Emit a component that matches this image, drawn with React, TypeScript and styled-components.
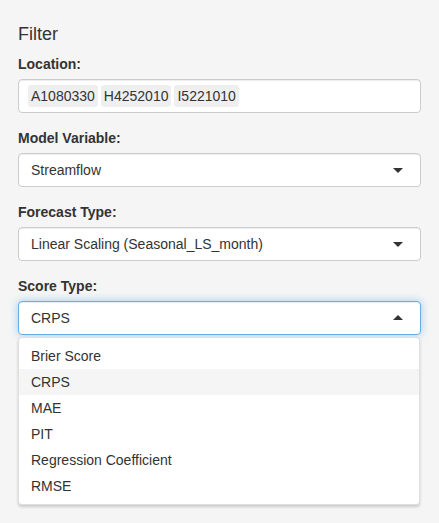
import React, { useState } from 'react';
import styled, { createGlobalStyle, css } from 'styled-components';

const GlobalStyle = createGlobalStyle`
  html, body {
    margin: 0;
    padding: 0;
    background: #f5f5f5;
  }
  body {
    font-family: 'Liberation Sans', Arial, sans-serif;
    font-size: 14px;
    line-height: 20px;
    color: #333;
  }
`;

const Panel = styled.div`
  box-sizing: border-box;
  width: 439px;
  min-height: 523px;
  padding: 24px 18px 0 18px;
  background: #f5f5f5;
`;

const Heading = styled.h4`
  margin: 0 0 10px 0;
  height: 20px;
  font-size: 18px;
  font-weight: 500;
  line-height: 20px;
  color: #333;
`;

const FormGroup = styled.div`
  position: relative;
  margin-bottom: 15px;
`;

const Label = styled.label`
  display: block;
  margin-bottom: 5px;
  font-weight: bold;
  line-height: 20px;
`;

const Control = styled.div<{ $focused?: boolean; $multi?: boolean }>`
  box-sizing: border-box;
  display: flex;
  align-items: center;
  height: 34px;
  padding: 0 17px 0 ${({ $multi }) => ($multi ? '9px' : '12px')};
  background: #fff;
  border: 1px solid #ccc;
  border-radius: 4px;
  box-shadow: inset 0 1px 1px rgba(0, 0, 0, 0.075);
  cursor: pointer;
  ${({ $focused }) =>
    $focused &&
    css`
      border-color: #66afe9;
      box-shadow: inset 0 1px 1px rgba(0, 0, 0, 0.075), 0 0 8px rgba(102, 175, 233, 0.6);
    `}
`;

const Value = styled.span`
  flex: 1;
  white-space: nowrap;
`;

const Chip = styled.span`
  padding: 1px 3px;
  margin-right: 3px;
  background: #efefef;
  border-radius: 3px;
  line-height: 20px;
`;

const Caret = styled.span<{ $up?: boolean }>`
  width: 0;
  height: 0;
  margin-left: auto;
  border-left: 5px solid transparent;
  border-right: 5px solid transparent;
  ${({ $up }) =>
    $up
      ? css`
          border-bottom: 5px solid #333;
          margin-top: -2px;
        `
      : css`
          border-top: 5px solid #333;
          margin-top: 1px;
        `}
`;

const Dropdown = styled.div`
  position: absolute;
  top: calc(100% + 2px);
  left: 0;
  right: 1px;
  z-index: 10;
  padding: 5px 0;
  background: #fff;
  border: 1px solid rgba(0, 0, 0, 0.12);
  border-radius: 4px;
  box-shadow: 0 2px 3px rgba(0, 0, 0, 0.18);
`;

const Option = styled.div<{ $active?: boolean }>`
  padding: 3px 12px;
  line-height: 20px;
  color: #333;
  background: ${({ $active }) => ($active ? '#f5f5f5' : 'transparent')};
  cursor: pointer;
`;

const scoreTypes = ['Brier Score', 'CRPS', 'MAE', 'PIT', 'Regression Coefficient', 'RMSE'];

export default function App() {
  const [score, setScore] = useState('CRPS');

  return (
    <Panel>
      <GlobalStyle />
      <Heading>Filter</Heading>

      <FormGroup>
        <Label>Location:</Label>
        <Control $multi>
          <Chip>A1080330</Chip>
          <Chip>H4252010</Chip>
          <Chip>I5221010</Chip>
        </Control>
      </FormGroup>

      <FormGroup>
        <Label>Model Variable:</Label>
        <Control>
          <Value>Streamflow</Value>
          <Caret />
        </Control>
      </FormGroup>

      <FormGroup>
        <Label>Forecast Type:</Label>
        <Control>
          <Value>Linear Scaling (Seasonal_LS_month)</Value>
          <Caret />
        </Control>
      </FormGroup>

      <FormGroup>
        <Label>Score Type:</Label>
        <Control $focused>
          <Value>{score}</Value>
          <Caret $up />
        </Control>
        <Dropdown>
          {scoreTypes.map((s) => (
            <Option key={s} $active={s === score} onClick={() => setScore(s)}>
              {s}
            </Option>
          ))}
        </Dropdown>
      </FormGroup>
    </Panel>
  );
}
